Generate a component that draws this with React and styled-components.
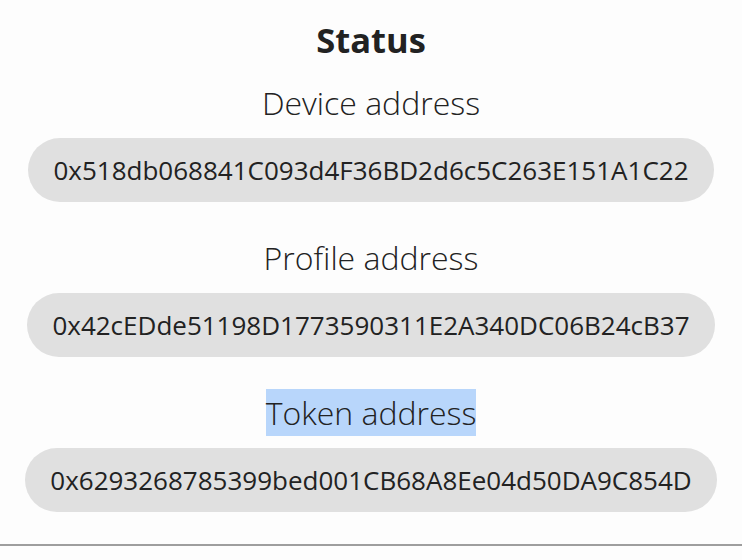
import React from 'react';
import styled, { createGlobalStyle } from 'styled-components';

const GlobalStyle = createGlobalStyle`
    html, body {
        margin: 0;
        padding: 0;
        background: #fdfdfd;
    }
    body {
        font-family: "Open Sans", "Noto Sans", sans-serif;
        color: #222;
    }
`;

const entries = [
    { label: 'Device address', value: '0x518db068841C093d4F36BD2d6c5C263E151A1C22' },
    { label: 'Profile address', value: '0x42cEDde51198D1773590311E2A340DC06B24cB37' },
    { label: 'Token address', value: '0x6293268785399bed001CB68A8Ee04d50DA9C854D', selected: true },
];

export default function App () {
    return (
        <>
            <GlobalStyle />
            <Container>
                <Title>Status</Title>
                <List>
                    {entries.map(entry => (
                        <Entry key={entry.label}>
                            <Label $selected={entry.selected}>{entry.label}</Label>
                            <Address>{entry.value}</Address>
                        </Entry>
                    ))}
                </List>
            </Container>
        </>
    )
}

const Container = styled.div`
    display: flex;
    flex-direction: column;
    align-items: center;
    width: 742px;
    height: 546px;
    box-sizing: border-box;
    padding-top: 18px;
    border-bottom: 2px solid #9e9e9e;
    box-shadow: 0 3px 3px -1px rgba(0, 0, 0, 0.08);
`;

const Title = styled.h1`
    margin: 0 0 17px;
    font-size: 34.5px;
    font-weight: 700;
    line-height: 44px;
`;

const List = styled.div`
    display: flex;
    flex-direction: column;
    align-items: center;
    gap: 32px;
`;

const Entry = styled.div`
    display: flex;
    flex-direction: column;
    align-items: center;
    gap: 12px;
`;

const Label = styled.span`
    font-size: 32px;
    font-weight: 300;
    line-height: 47px;
    background: ${p => (p.$selected ? '#b8d6fb' : 'transparent')};
`;

const Address = styled.div`
    height: 64px;
    line-height: 64px;
    padding: 0 25px;
    border-radius: 32px;
    background: #e0e0e0;
    font-size: 26px;
    font-weight: 400;
    white-space: nowrap;
`;
